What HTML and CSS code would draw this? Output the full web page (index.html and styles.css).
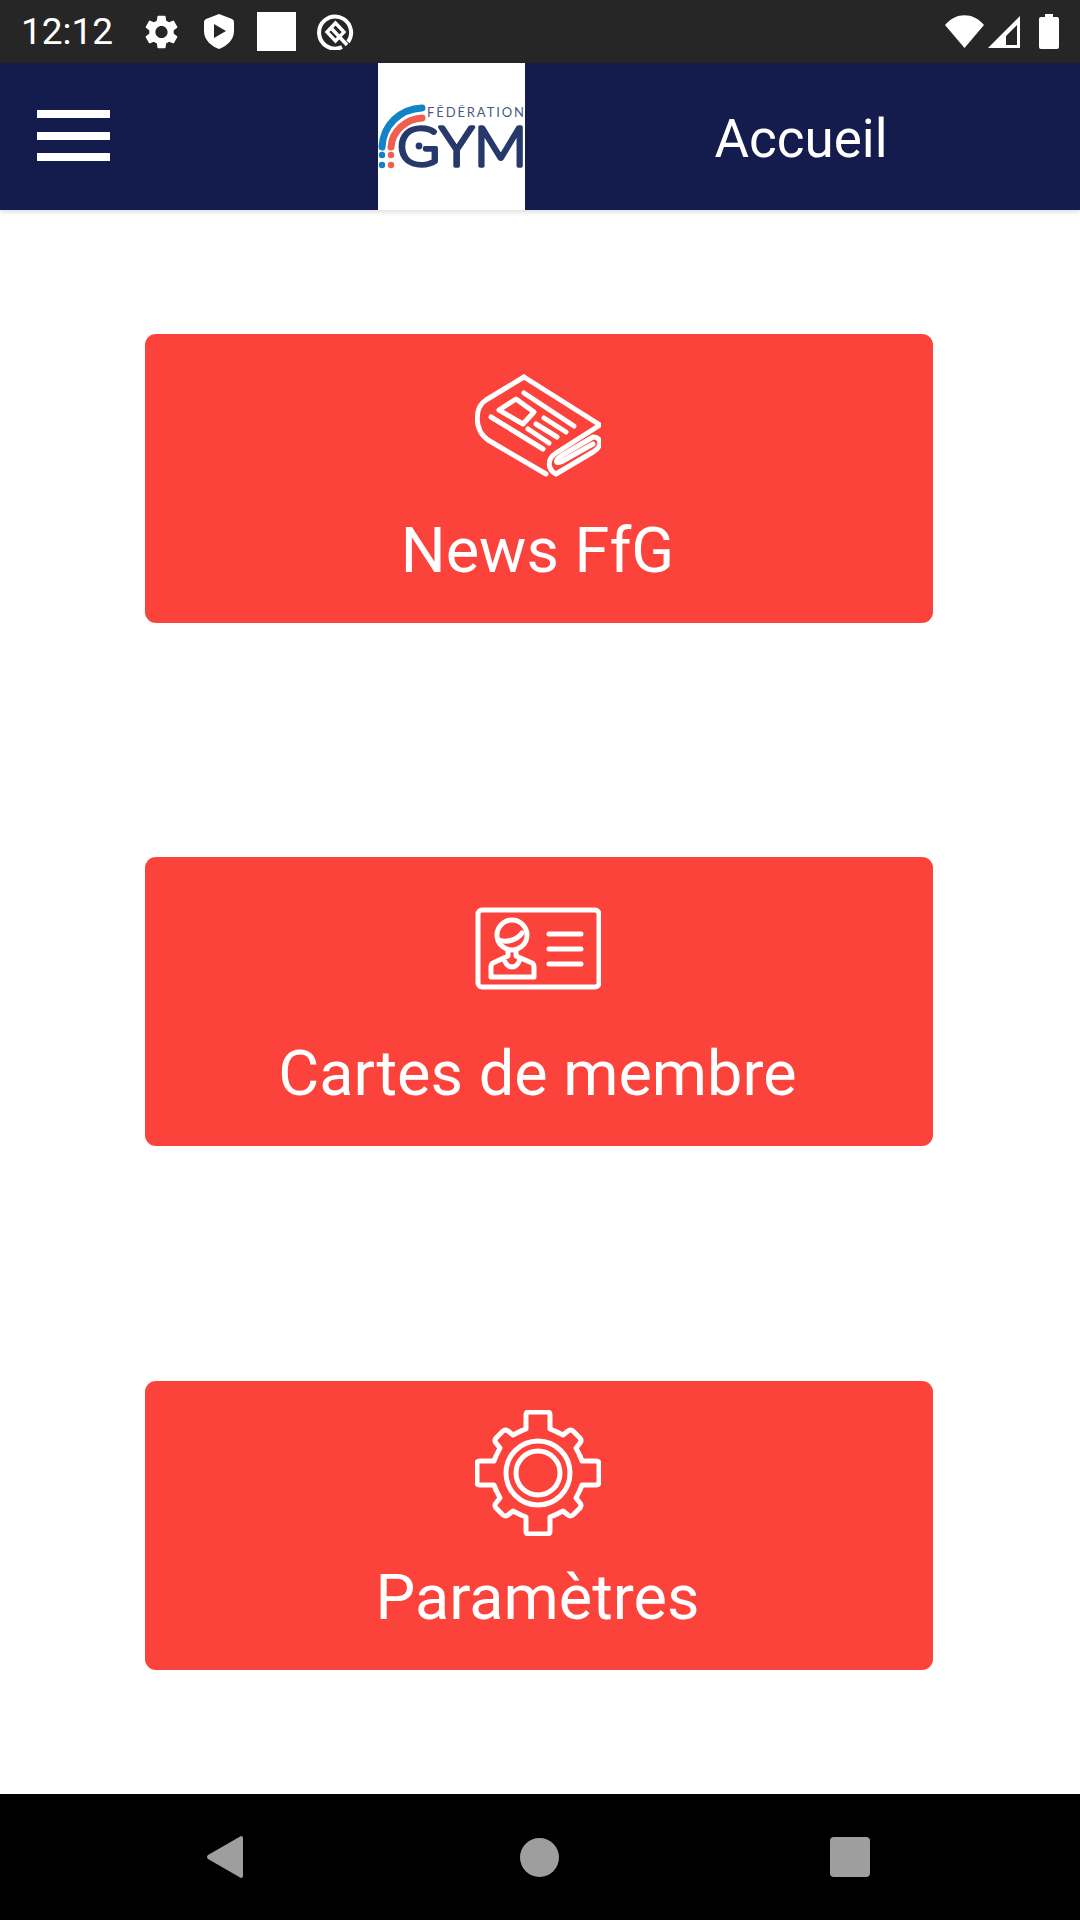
FILE: index.html
```html
<!DOCTYPE html>
<html lang="fr">
    <head>
        <meta charset="UTF-8" />
        <meta name="viewport" content="width=device-width, initial-scale=1.0" />
        <title>Accueil</title>
        <link rel="stylesheet" href="styles.css">
    </head>

    <body>
        <!-- status bar -->
        <div class="status-bar">
            <span class="status-time">12:12</span>
            <svg class="st-gear" viewBox="2.4 2 19.2 20"><path d="M19.14 12.94c.04-.3.06-.61.06-.94 0-.32-.02-.64-.07-.94l2.03-1.58c.18-.14.23-.41.12-.61l-1.92-3.32c-.12-.22-.37-.29-.59-.22l-2.39.96c-.5-.38-1.03-.7-1.62-.94l-.36-2.54c-.04-.24-.24-.41-.48-.41h-3.84c-.24 0-.43.17-.47.41l-.36 2.54c-.59.24-1.13.57-1.62.94l-2.39-.96c-.22-.08-.47 0-.59.22L2.74 8.87c-.12.21-.08.47.12.61l2.03 1.58c-.05.3-.09.63-.09.94s.02.64.07.94l-2.03 1.58c-.18.14-.23.41-.12.61l1.92 3.32c.12.22.37.29.59.22l2.39-.96c.5.38 1.03.7 1.62.94l.36 2.54c.05.24.24.41.48.41h3.84c.24 0 .44-.17.47-.41l.36-2.54c.59-.24 1.13-.56 1.62-.94l2.39.96c.22.08.47 0 .59-.22l1.92-3.32c.12-.22.07-.47-.12-.61l-2.01-1.58zM12 15.6c-1.98 0-3.6-1.62-3.6-3.6s1.62-3.6 3.6-3.6 3.6 1.62 3.6 3.6-1.62 3.6-3.6 3.6z"/></svg>
            <svg class="st-shield" viewBox="0 0 30 35"><path fill-rule="evenodd" d="M15 0 L28 5 Q30 6 30 8 V17 C30 26 23 32 15 35 C7 32 0 26 0 17 V8 Q0 6 2 5 Z M10 10 V24 L22 17 Z"/></svg>
            <div class="st-square"></div>
            <svg class="st-q" viewBox="0 0 37 36"><path d="M31 28 A16 16 0 1 0 25 33" fill="none" stroke="#fff" stroke-width="4"/><path d="M18.5 9 L10 18 L18.5 27 L27 18 Z" fill="none" stroke="#fff" stroke-width="3.4"/><path d="M15 15 L30 31" fill="none" stroke="#fff" stroke-width="3.4"/></svg>
            <div class="status-right">
                <svg class="st-wifi" viewBox="0 0 39 33"><path d="M0 10 C11 -3 28 -3 39 10 L19.5 33 Z"/></svg>
                <svg class="st-signal" viewBox="0 0 32 32"><path fill-rule="evenodd" d="M32 0 V32 H0 Z M29 9 L18 20 V29 H29 Z"/></svg>
                <svg class="st-battery" viewBox="0 0 20 35"><path d="M6 0 H14 V3 H18 Q20 3 20 5 V33 Q20 35 18 35 H2 Q0 35 0 33 V5 Q0 3 2 3 H6 Z"/></svg>
            </div>
        </div>

        <!-- header -->
        <header class="top-bar">
            <div class="menu-btn">
                <span></span>
                <span></span>
                <span></span>
            </div>
            <div class="logo">
                <svg viewBox="0 0 147 147">
                    <path d="M44 45 C22 46 5 62 4 84" fill="none" stroke="#1283c9" stroke-width="7" stroke-linecap="round"/>
                    <path d="M44 55 C28 56 14 68 13 84" fill="none" stroke="#ee5f4f" stroke-width="7" stroke-linecap="round"/>
                    <circle cx="4" cy="92" r="3.2" fill="#1283c9"/>
                    <circle cx="4" cy="102" r="3.2" fill="#1283c9"/>
                    <circle cx="13" cy="92" r="3.2" fill="#ee5f4f"/>
                    <circle cx="13" cy="102" r="3.2" fill="#ee5f4f"/>
                    <text class="logo-small" x="49" y="54" textLength="97" lengthAdjust="spacing">FĒDĒRATION</text>
                    <text class="logo-big" x="19" y="103" textLength="130" lengthAdjust="spacingAndGlyphs">GYM</text>
                    <circle cx="41" cy="83" r="3.4" fill="#27386b"/>
                </svg>
            </div>
            <h1 class="page-title">Accueil</h1>
        </header>

        <!-- menu -->
        <main class="home">
            <a class="card">
                <svg class="card-icon" viewBox="0 0 126 126">
                    <path d="M49 14 L125 62 L81 90 C72 96 72 106 81 111 L118 89 C127 84 127 74 118 74 L86 93 C80 97 80 101 86 99 L118 81 M49 14 L11 37 C0 44 -2 66 13 77 L71 111"/>
                    <path d="M49 30 L99 63 M16 54 L68 86 M24 47 L41 36 L59 49 L48 61 Z M69 55 L91 69 M61 61 L82 74 M53 66 L74 80"/>
                </svg>
                <span class="card-label">News FfG</span>
            </a>
            <a class="card">
                <svg class="card-icon" viewBox="0 0 126 126">
                    <rect x="3" y="24" width="121" height="77" rx="4"/>
                    <circle cx="37" cy="49" r="15"/>
                    <path d="M24 54 C32 57 42 54 47 47 M33 65 V70 L18 77 Q16 78 16 81 V91 H59 V81 Q59 78 57 77 L41 70 V65 M29 72 C31 84 43 84 45 72 M74 48 H106 M74 63 H106 M74 78 H106"/>
                </svg>
                <span class="card-label">Cartes de membre</span>
            </a>
            <a class="card">
                <svg class="card-icon" viewBox="0 0 126 126">
                    <g transform="translate(63 63)">
                        <path d="M-17 -42 L-12 -44 V-58 Q-12 -61 -9 -61 H9 Q12 -61 12 -58 V-44 L17 -42 M17 -42 L25 -38 L30 -42 Q32 -44 35 -42 L42 -35 Q44 -32 42 -30 L38 -25 L42 -17"/>
                        <path transform="rotate(90)" d="M-17 -42 L-12 -44 V-58 Q-12 -61 -9 -61 H9 Q12 -61 12 -58 V-44 L17 -42 M17 -42 L25 -38 L30 -42 Q32 -44 35 -42 L42 -35 Q44 -32 42 -30 L38 -25 L42 -17"/>
                        <path transform="rotate(180)" d="M-17 -42 L-12 -44 V-58 Q-12 -61 -9 -61 H9 Q12 -61 12 -58 V-44 L17 -42 M17 -42 L25 -38 L30 -42 Q32 -44 35 -42 L42 -35 Q44 -32 42 -30 L38 -25 L42 -17"/>
                        <path transform="rotate(270)" d="M-17 -42 L-12 -44 V-58 Q-12 -61 -9 -61 H9 Q12 -61 12 -58 V-44 L17 -42 M17 -42 L25 -38 L30 -42 Q32 -44 35 -42 L42 -35 Q44 -32 42 -30 L38 -25 L42 -17"/>
                        <circle r="32"/>
                        <circle r="22"/>
                    </g>
                </svg>
                <span class="card-label">Paramètres</span>
            </a>
        </main>

        <!-- android nav -->
        <nav class="nav-bar">
            <svg class="nav-back" viewBox="0 0 36 42"><path d="M34 0 Q36 0 36 2 V40 Q36 42 34 42 L1 23 Q-1 21 1 19 Z"/></svg>
            <div class="nav-home"></div>
            <div class="nav-recent"></div>
        </nav>
    </body>
</html>
```

FILE: styles.css
```css
* {
    margin: 0;
    padding: 0;
    box-sizing: border-box;
}
html,
body {
    width: 1080px;
    height: 1920px;
    overflow: hidden;
    background: #fff;
    font-family: Roboto, "Liberation Sans", sans-serif;
}
body {
    display: flex;
    flex-direction: column;
}

/* status bar */
.status-bar {
    display: flex;
    align-items: center;
    height: 63px;
    padding: 0 21px 0 21px;
    background: #262626;
    color: #fff;
}
.status-bar svg {
    display: block;
    fill: #fff;
}
.status-time {
    width: 92px;
    font-size: 37px;
    line-height: 63px;
}
.st-gear {
    width: 33px;
    height: 34px;
    margin-left: 32px;
}
.st-shield {
    width: 30px;
    height: 35px;
    margin-left: 26px;
}
.st-square {
    width: 39px;
    height: 39px;
    margin-left: 23px;
    background: #fff;
}
.st-q {
    width: 37px;
    height: 36px;
    margin-left: 21px;
}
.status-right {
    display: flex;
    align-items: center;
    margin-left: auto;
}
.st-wifi {
    width: 39px;
    height: 33px;
}
.st-signal {
    width: 32px;
    height: 32px;
    margin-left: 4px;
}
.st-battery {
    width: 20px;
    height: 35px;
    margin-left: 19px;
}

/* header */
.top-bar {
    display: flex;
    align-items: center;
    height: 147px;
    padding-left: 37px;
    background: #141b4d;
    box-shadow: 0 2px 5px rgba(0, 0, 0, 0.14);
    z-index: 2;
}
.menu-btn {
    display: flex;
    flex-direction: column;
    gap: 13.5px;
    width: 73px;
    margin: -2px 268px 0 0;
    filter: blur(0.5px);
}
.menu-btn span {
    display: block;
    height: 8px;
    background: #fff;
}
.logo {
    width: 147px;
    height: 147px;
    background: #fff;
    overflow: hidden;
}
.logo svg {
    display: block;
    width: 147px;
    height: 147px;
}
.logo-small {
    font-family: Lato, sans-serif;
    font-size: 13px;
    fill: #4b5a80;
}
.logo-big {
    font-family: Lato, sans-serif;
    font-size: 56px;
    font-weight: 300;
    fill: #27386b;
    stroke: #27386b;
    stroke-width: 3.5px;
    stroke-linejoin: round;
}
.page-title {
    flex: 1;
    padding: 4px 3px 0 0;
    text-align: center;
    font-size: 53px;
    font-weight: 400;
    color: #fff;
}

/* menu cards */
.home {
    flex: 1;
    display: flex;
    flex-direction: column;
    align-items: center;
    gap: 234.5px;
    padding: 123.7px 2px 0 0;
}
.card {
    display: flex;
    flex-direction: column;
    align-items: center;
    width: 788px;
    height: 289px;
    padding: 29px 3px 0 0;
    background: #fb433b;
    border-radius: 11px;
    color: #fff;
}
.card-icon {
    width: 126px;
    height: 126px;
    fill: none;
    stroke: #fff;
    stroke-width: 5;
    stroke-linecap: round;
    stroke-linejoin: round;
    filter: blur(0.4px);
}
.card-label {
    margin-top: 26px;
    font-size: 63px;
    line-height: 72px;
}

/* nav bar */
.nav-bar {
    position: relative;
    height: 126px;
    background: #000;
}
.nav-back {
    position: absolute;
    left: 207px;
    top: 42px;
    width: 36px;
    height: 42px;
    fill: #9e9e9e;
}
.nav-home {
    position: absolute;
    left: 520px;
    top: 44px;
    width: 39px;
    height: 39px;
    border-radius: 50%;
    background: #9e9e9e;
}
.nav-recent {
    position: absolute;
    left: 830px;
    top: 43px;
    width: 40px;
    height: 40px;
    border-radius: 4px;
    background: #9e9e9e;
}
```
